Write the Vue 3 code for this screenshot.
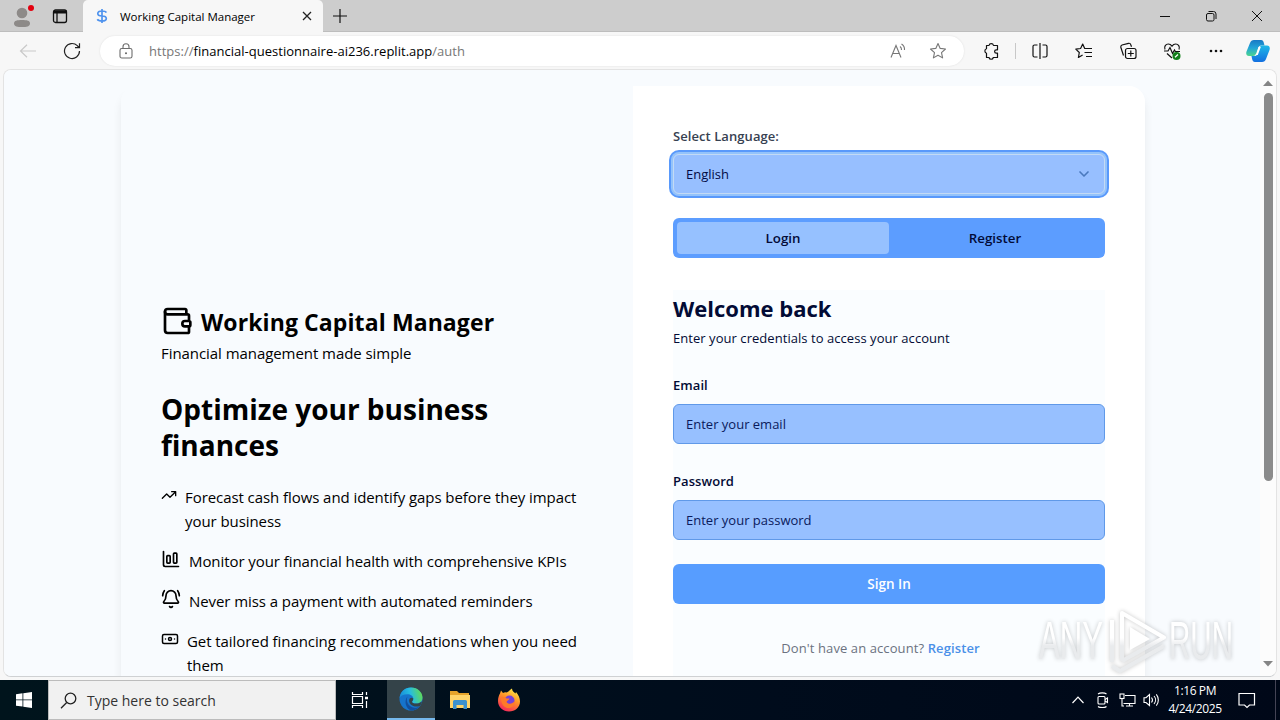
<script setup>
import { ref } from 'vue';

const language = ref('English');
const mode = ref('login');
const email = ref('');
const password = ref('');

const features = [
    { icon: 'trend', width: 16, lines: ['Forecast cash flows and identify gaps before they impact', 'your business'] },
    { icon: 'chart', width: 20, lines: ['Monitor your financial health with comprehensive KPIs'] },
    { icon: 'bell', width: 20, lines: ['Never miss a payment with automated reminders'] },
    { icon: 'banknote', width: 18, lines: ['Get tailored financing recommendations when you need', 'them'] }
];
</script>

<template>
    <div class="desktop">
        <header class="tab-bar">
            <div class="profile">
                <svg width="24" height="26" viewBox="0 0 24 26">
                    <circle cx="11" cy="10" r="5.3" fill="#8d8a88" />
                    <path d="M3 20.500c0-3 3-3.500 8-3.500s8 .5 8 3.500S15.500 24 11 24s-8-.5-8-3.500z" fill="#8d8a88" />
                    <circle cx="20" cy="5" r="3" fill="#e3000f" />
                </svg>
            </div>
            <svg class="workspaces" width="16" height="16" viewBox="0 0 16 16" fill="none" stroke="#111" stroke-width="1.300">
                <rect x="1.500" y="2" width="13" height="12.500" rx="2" />
                <path d="M1.500 4h13" stroke-width="3" />
                <path d="M5 4v10" />
            </svg>
            <div class="tab">
                <svg class="favicon" width="12" height="16" viewBox="0 0 12 16" fill="none" stroke="#4f93ee" stroke-width="1.700">
                    <path d="M6 1v14M10.500 4.500C9.700 3.300 8 3 6 3 3.700 3 1.800 3.800 1.800 5.600S3.500 8 6 8s4.300.7 4.300 2.500S8.500 13 6 13s-4-.5-4.700-1.700" />
                </svg>
                <span class="tab-title">Working Capital Manager</span>
                <svg width="10" height="10" viewBox="0 0 10 10" stroke="#222" stroke-width="1.300">
                    <path d="M1 1l8 8M9 1l-8 8" />
                </svg>
            </div>
            <svg class="new-tab" width="14" height="14" viewBox="0 0 14 14" stroke="#111" stroke-width="1.200">
                <path d="M7 0v14M0 7h14" />
            </svg>
            <div class="window-buttons">
                <svg width="12" height="12" viewBox="0 0 12 12" stroke="#111"><path d="M1 6.500h10" /></svg>
                <svg width="12" height="12" viewBox="0 0 12 12" fill="none" stroke="#111">
                    <rect x="1.500" y="3.500" width="7.500" height="7.500" rx="1.500" />
                    <path d="M3.500 1.500H8.500a2.500 2.500 0 0 1 2.500 2.500v5" />
                </svg>
                <svg width="12" height="12" viewBox="0 0 12 12" stroke="#111"><path d="M1 1l10 10M11 1L1 11" /></svg>
            </div>
        </header>

        <nav class="toolbar">
            <svg class="back" width="18" height="14" viewBox="0 0 18 14" fill="none" stroke="#c9c9c9" stroke-width="1.200">
                <path d="M17 7H1.500M8 .7L1.500 7 8 13.300" />
            </svg>
            <svg class="reload" width="18" height="18" viewBox="0 0 18 18" fill="none" stroke="#222" stroke-width="1.200">
                <path d="M16.500 9A7.500 7.500 0 1 1 14.300 3.700L16 5.500M16.500 1.200v4.500H12" />
            </svg>
            <div class="address">
                <svg class="lock" width="14" height="16" viewBox="0 0 14 16" fill="none" stroke="#6d6d6d" stroke-width="1.100">
                    <rect x="1" y="5.500" width="12" height="9.500" rx="1.800" />
                    <path d="M4 5.500V3.700a3 3 0 0 1 6 0v1.800" />
                    <circle cx="7" cy="10.300" r=".5" fill="#6d6d6d" />
                </svg>
                <p class="url"><span>https://</span>financial-questionnaire-ai236.replit.app<span>/auth</span></p>
                <svg class="read" width="17" height="16" viewBox="0 0 17 16" fill="none" stroke="#777" stroke-width="1.100">
                    <path d="M1 14.500L6 2.500l5 12M2.800 10.500h6.500" />
                    <path d="M10 3.500a4 4 0 0 1 1.500 3.500M11.500 1a6.500 6.500 0 0 1 3 6" />
                </svg>
                <svg width="18" height="18" viewBox="0 0 18 18" fill="none" stroke="#777" stroke-width="1.100" stroke-linejoin="round">
                    <path d="M9 1.500l2.200 4.900 5.300.6-4 3.600 1.100 5.300L9 13.200l-4.600 2.700 1.100-5.300-4-3.600 5.300-.6z" />
                </svg>
            </div>
            <div class="tools">
                <svg width="18" height="18" viewBox="0 0 18 18" fill="none" stroke="#111" stroke-width="1.200" stroke-linejoin="round">
                    <path d="M3.500 3.500H6a2.300 2.300 0 0 1 4.500 0h4v4.300h-1.200a1.600 1.600 0 0 0 0 3.400h1.200v4.300h-4.200a2.200 2.200 0 0 1-4.300 0H3.500v-4.300a2.300 2.300 0 0 1 0-4.400z" />
                </svg>
                <i class="divider"></i>
                <svg width="18" height="18" viewBox="0 0 18 18" fill="none" stroke="#111" stroke-width="1.200">
                    <path d="M6.500 3H3.500A1.500 1.500 0 0 0 2 4.500v9A1.500 1.500 0 0 0 3.500 15h3M11.500 3h3A1.500 1.500 0 0 1 16 4.500v9a1.500 1.500 0 0 1-1.500 1.500h-3M9 1v16" />
                </svg>
                <svg width="18" height="18" viewBox="0 0 18 18" fill="none" stroke="#111" stroke-width="1.200" stroke-linejoin="round">
                    <path d="M13.500 6.500h-3.800L7.700 2 5.600 6.500l-4.800.6 3.500 3.400-.9 5 4.200-2.500M11.500 6.500H17M9.500 10.500H17M11 14.500h6" />
                </svg>
                <svg width="18" height="18" viewBox="0 0 18 18" fill="none" stroke="#111" stroke-width="1.200">
                    <rect x="6.500" y="6.500" width="10.500" height="10" rx="2" />
                    <path d="M11.800 8.500v6M8.800 11.500h6M4.500 13.500L1.800 5.300A2 2 0 0 1 3 3L9.500 1.300a2 2 0 0 1 2.300 1.400l.7 2" />
                </svg>
                <svg width="18" height="18" viewBox="0 0 18 18" fill="none" stroke="#111" stroke-width="1.200">
                    <path d="M2 7.500C.8 4.500 2.800 2 5.300 2 7 2 8.300 3.200 9 4.200 9.700 3.200 11 2 12.700 2c2.500 0 4.500 2.500 3.300 5.500M1 9h4l2-3.500 2.500 6L11.500 8l.8 1.500H17M4 11.500l5 4.500" />
                    <circle cx="13.500" cy="14" r="4" fill="#12801b" stroke="none" />
                    <path d="M12 15.300l3-2.800" stroke="#fff" />
                </svg>
                <svg width="18" height="18" viewBox="0 0 18 18" fill="#111">
                    <circle cx="4" cy="9" r="1.300" /><circle cx="9" cy="9" r="1.300" /><circle cx="14" cy="9" r="1.300" />
                </svg>
            </div>
            <svg class="copilot" width="24" height="24" viewBox="0 0 24 24">
                <defs>
                    <linearGradient id="cp-left" x1="0" y1="0" x2="0" y2="1">
                        <stop offset="0" stop-color="#1879c5" />
                        <stop offset=".5" stop-color="#22a5d8" />
                        <stop offset="1" stop-color="#4bd58e" />
                    </linearGradient>
                    <linearGradient id="cp-right" x1="0" y1="0" x2="0" y2="1">
                        <stop offset="0" stop-color="#1fb9e8" />
                        <stop offset="1" stop-color="#126fe0" />
                    </linearGradient>
                </defs>
                <path d="M8 1h7c2 0 2.500 1.500 3 3.500l.5 2h-3c-2 0-3 1-3.500 3L10 15c-.5 1.300-1.500 2-3 2H3c-2.500 0-3.300-2-2.500-4.500L4 4c.7-2 2-3 4-3z" fill="url(#cp-left)" />
                <path d="M16 23H9c-2 0-2.500-1.500-3-3.500L5.500 17H8c2 0 3-.5 3.500-2.500L14 8c.5-1.300 1.500-1.500 3-1.500h4c2.500 0 3.300 2 2.500 4.500L20 20c-.7 2-2 3-4 3z" fill="url(#cp-right)" />
                <path d="M12.500 8h2.300l-3 8H8.500c1.500 0 2-.7 2.400-2z" fill="#fff" />
            </svg>
        </nav>

        <div class="frame">
            <main class="page">
                <div class="card">
                    <section class="intro">
                        <div class="brand">
                            <svg class="stroke-icon" width="32" height="32" viewBox="0 0 24 24">
                                <path d="M19 7V4a1 1 0 0 0-1-1H5a2 2 0 0 0 0 4h15a1 1 0 0 1 1 1v4h-3a2 2 0 0 0 0 4h3a1 1 0 0 0 1-1v-2a1 1 0 0 0-1-1" />
                                <path d="M3 5v14a2 2 0 0 0 2 2h15a1 1 0 0 0 1-1v-4" />
                            </svg>
                            <h1>Working Capital Manager</h1>
                        </div>
                        <p class="tagline">Financial management made simple</p>
                        <h2>Optimize your business<br>finances</h2>
                        <ul>
                            <li v-for="item in features" :key="item.icon">
                                <svg class="stroke-icon" :width="item.width" height="20" viewBox="0 0 24 24">
                                    <path v-if="item.icon === 'trend'" d="M22 7l-8.500 8.500-5-5L2 17M16 7h6v6" />
                                    <g v-else-if="item.icon === 'chart'">
                                        <path d="M3 3v16a2 2 0 0 0 2 2h16" />
                                        <rect x="15" y="5" width="4" height="12" rx="1" />
                                        <rect x="7" y="8" width="4" height="9" rx="1" />
                                    </g>
                                    <path v-else-if="item.icon === 'bell'" d="M10.268 21a2 2 0 0 0 3.464 0M22 8c0-2.300-.8-4.300-2-6M3.262 15.326A1 1 0 0 0 4 17h16a1 1 0 0 0 .74-1.673C19.410 13.956 18 12.499 18 8A6 6 0 0 0 6 8c0 4.499-1.411 5.956-2.738 7.326M4 2C2.800 3.700 2 5.700 2 8" />
                                    <g v-else>
                                        <rect x="2" y="6" width="20" height="12" rx="2" />
                                        <circle cx="12" cy="12" r="2" />
                                        <path d="M6 12h.01M18 12h.01" />
                                    </g>
                                </svg>
                                <div>
                                    <p v-for="line in item.lines" :key="line">{{ line }}</p>
                                </div>
                            </li>
                        </ul>
                    </section>

                    <section class="auth">
                        <label class="language-label">Select Language:</label>
                        <button class="select">
                            <span>{{ language }}</span>
                            <svg width="16" height="16" viewBox="0 0 24 24" fill="none" stroke="#4a79bd" stroke-width="2.500" stroke-linecap="round" stroke-linejoin="round">
                                <path d="M6 9l6 6 6-6" />
                            </svg>
                        </button>
                        <div class="tabs">
                            <button :class="{ active: mode === 'login' }" @click="mode = 'login'">Login</button>
                            <button :class="{ active: mode === 'register' }" @click="mode = 'register'">Register</button>
                        </div>
                        <form @submit.prevent>
                            <h3>Welcome back</h3>
                            <p class="hint">Enter your credentials to access your account</p>
                            <label for="email" class="email-label">Email</label>
                            <input id="email" v-model="email" type="email" placeholder="Enter your email">
                            <label for="password" class="password-label">Password</label>
                            <input id="password" v-model="password" type="password" placeholder="Enter your password">
                            <button class="submit">Sign In</button>
                            <p class="switch">Don't have an account? <a @click="mode = 'register'">Register</a></p>
                        </form>
                    </section>
                </div>
            </main>
            <div class="scrollbar">
                <svg width="10" height="6" viewBox="0 0 10 6"><path d="M0 6L5 .5 10 6z" fill="#858585" /></svg>
                <div class="thumb"></div>
                <svg class="down" width="10" height="6" viewBox="0 0 10 6"><path d="M0 0l5 5.500L10 0z" fill="#858585" /></svg>
            </div>
        </div>

        <svg class="watermark" width="210" height="74" viewBox="0 0 210 74">
            <defs>
                <linearGradient id="mark" gradientUnits="userSpaceOnUse" x1="0" y1="34" x2="0" y2="42">
                    <stop offset="0" stop-color="#fff" />
                    <stop offset="1" stop-color="#e9ebed" />
                </linearGradient>
            </defs>
            <g fill="url(#mark)">
                <text x="5" y="55" textLength="64" lengthAdjust="spacingAndGlyphs">ANY</text>
                <text x="135" y="55" textLength="64" lengthAdjust="spacingAndGlyphs">RUN</text>
            </g>
            <g fill="none" stroke="url(#mark)" stroke-width="4" stroke-linejoin="round">
                <path d="M88 57V9l42 24.500L88 57M78 58V16M78 62l8 5 44-25" />
            </g>
            <path d="M96 23v23l20-11z" fill="#fff" />
        </svg>

        <footer class="taskbar">
            <div class="start">
                <svg width="16" height="16" viewBox="0 0 16 16" fill="#fff">
                    <path d="M0 2.200L6.500 1.300v6.200H0zM7.300 1.200L16 0v7.500H7.300zM0 8.300h6.500v6.300L0 13.700zM7.300 8.300H16V16l-8.700-1.200z" />
                </svg>
            </div>
            <div class="search">
                <svg width="17" height="17" viewBox="0 0 17 17" fill="none" stroke="#222" stroke-width="1.300">
                    <circle cx="10.500" cy="6.500" r="5.300" /><path d="M6.700 10.500L1 16.300" />
                </svg>
                <span>Type here to search</span>
            </div>
            <div class="app">
                <svg width="18" height="18" viewBox="0 0 18 18" fill="none" stroke="#fff" stroke-width="1.200">
                    <path d="M1.500 1v2.500h10V1M1.500 17v-2.500h10V17M1.500 5.500h10v7h-10zM15.500 1v3M15.500 10v7" />
                    <path d="M14 7h3" stroke-width="2.500" />
                </svg>
            </div>
            <div class="app current">
                <svg width="24" height="24" viewBox="0 0 24 24">
                    <defs>
                        <linearGradient id="edge-top" x1="0" y1=".6" x2="1" y2=".4">
                            <stop offset="0" stop-color="#1689d8" />
                            <stop offset=".5" stop-color="#27bde0" />
                            <stop offset="1" stop-color="#62dc52" />
                        </linearGradient>
                    </defs>
                    <circle cx="12" cy="12" r="11.500" fill="#1674cc" />
                    <path d="M.6 11C1.400 4.500 6 .5 12 .5c7 0 11.500 5 11.500 10 0 4-3 6-6.500 6-2.500 0-4-.8-4-1.600 0-.7 1.300-1.300 1.300-3.200C14.300 9 11.500 7.300 8.500 7.300 4.500 7.300 1.500 9 .6 11z" fill="url(#edge-top)" />
                    <path d="M8.500 9.500C6.500 14 9 20 15.500 20.800c2 .2 4.200-.5 5.800-2C19 22 15.500 23.500 12.500 23.500 7 22.500 4.500 14 8.500 9.500z" fill="#124f9e" />
                    <path d="M14.300 11.500c0 2-1.300 2.600-1.300 3.400 0 1 2.500 2 5.300 1.500 2-.4 3-.8 4.200-2l.3 1.500-1.800 3c-6 2.500-12-2-10.700-6.400.4-1.500 2-2.500 4-1z" fill="#344349" />
                </svg>
            </div>
            <div class="app">
                <svg width="22" height="20" viewBox="0 0 22 20">
                    <path d="M1 1h7l2 2h10v4H1z" fill="#e6a42b" />
                    <path d="M1 5h20v13H1z" fill="#ffd469" />
                    <path d="M4 19v-7.500Q4 10 5.500 10h11q1.500 0 1.500 1.500V19h-3.500v-4h-7v4z" fill="#3b91cf" />
                </svg>
            </div>
            <div class="app">
                <svg width="24" height="24" viewBox="0 0 24 24">
                    <defs>
                        <linearGradient id="fox" x1=".8" y1="0" x2=".3" y2="1">
                            <stop offset="0" stop-color="#fff04a" />
                            <stop offset=".45" stop-color="#ff9427" />
                            <stop offset="1" stop-color="#f5265c" />
                        </linearGradient>
                    </defs>
                    <path d="M3 5.500l1-3 2 2.500c1-.6 2-.7 3-.6C11 4.500 12.500 2 15 .5c0 2.500 2 3.500 3.500 5L19 4c2.500 3 4 6 4 9.500C23 19.500 18 23.500 12 23.500S1 19 1 13c0-3 .8-5.500 2-7.500z" fill="url(#fox)" />
                    <circle cx="12.500" cy="12.500" r="5" fill="#7542d9" />
                    <path d="M4 9c3-.5 4 .5 5.500 1.500h3c0 1.500-2.500 2-3 3.500 2 3 6 2 8-1 .5 4-2 7-6 7C7 20 3.500 15 4 9z" fill="#ff7a28" />
                </svg>
            </div>
            <div class="tray">
                <svg width="12" height="8" viewBox="0 0 12 8" fill="none" stroke="#fff" stroke-width="1.200"><path d="M.5 7L6 1.200 11.500 7" /></svg>
                <svg class="meet" width="14" height="16" viewBox="0 0 14 16" fill="none" stroke="#fff" stroke-width="1.100">
                    <rect x="2" y="4.500" width="7" height="7.500" rx="1" />
                    <path d="M9 7.500l2.500-1.500v4.500L9 9M2 2c2-1.500 6.500-1.500 8.500 0M2 14.500c2 1.500 6.500 1.500 8.500 0" />
                </svg>
                <svg class="network" width="17" height="14" viewBox="0 0 17 14" fill="none" stroke="#fff" stroke-width="1.100">
                    <path d="M6 2.500h10v8H4.500M10.500 10.500v2.500M7 13h7M3 6v7h2" />
                    <rect x="1" y="1" width="4" height="4.500" />
                </svg>
                <svg class="sound" width="17" height="14" viewBox="0 0 17 14" fill="none" stroke="#fff" stroke-width="1.100">
                    <path d="M1 4.700h2L6.500 1.500v11L3 9.500H1zM8.500 4.500a4 4 0 0 1 0 5M11 3a6 6 0 0 1 0 8M13.300 1.300a9 9 0 0 1 0 11.400" />
                </svg>
                <div class="clock">
                    <p>1:16 PM</p>
                    <p>4/24/2025</p>
                </div>
                <svg class="notice" width="18" height="17" viewBox="0 0 18 17" fill="none" stroke="#fff" stroke-width="1.200">
                    <path d="M1 1.500h15.500v11.500h-5L9 15.500 6.500 13H1z" />
                </svg>
                <i class="peek"></i>
            </div>
        </footer>
    </div>
</template>

<style>
body {
    margin: 0;
    overflow: hidden;
}
</style>

<style scoped>
* {
    box-sizing: border-box;
}

.desktop {
    position: relative;
    width: 1280px;
    height: 720px;
    overflow: hidden;
    display: flex;
    flex-direction: column;
    background: #f7f7f7;
    color: #000;
    font-family: "Open Sans", "Noto Sans", sans-serif;
}

h1, h2, h3, p, ul {
    margin: 0;
    padding: 0;
}

svg {
    display: block;
    flex-shrink: 0;
}

button, input {
    font-family: inherit;
    border: 0;
    padding: 0;
}

/* browser */
.tab-bar {
    height: 32px;
    display: flex;
    align-items: center;
    background: #cdcdcd;
    border-bottom: 1px solid #bdbdbd;
}

.profile {
    margin-left: 11px;
    width: 24px;
}

.workspaces {
    margin-left: 17px;
}

.tab {
    width: 240px;
    height: 32px;
    margin-left: 15px;
    margin-bottom: -1px;
    padding: 0 11px 0 13px;
    display: flex;
    align-items: center;
    background: #f7f7f7;
    border-radius: 5px 5px 0 0;
}

.tab-title {
    flex: 1;
    margin-left: 12px;
    font-size: 11.5px;
    white-space: nowrap;
}

.new-tab {
    margin-left: 10px;
}

.window-buttons {
    margin-left: auto;
    margin-right: 17px;
    display: flex;
    gap: 34px;
}

.toolbar {
    height: 37px;
    display: flex;
    align-items: center;
    background: #f7f7f7;
}

.back {
    margin-left: 19px;
}

.reload {
    margin-left: 26px;
}

.address {
    width: 864px;
    height: 30px;
    margin-left: 19px;
    padding: 0 17px 0 19px;
    display: flex;
    align-items: center;
    border-radius: 15px;
    background: #fff;
    box-shadow: 0 0 2px #ddd;
}

.url {
    flex: 1;
    margin-left: 16px;
    font-size: 13px;
    letter-spacing: 0.02px;
}

.url span {
    color: #777;
}

.read {
    margin-right: 22px;
}

.tools {
    margin-left: 19px;
    display: flex;
    align-items: center;
    gap: 26px;
}

.divider {
    width: 1px;
    height: 16px;
    margin: 0 -11px 0 -12px;
    background: #c8c8c8;
}

.copilot {
    margin-left: 21px;
}

.frame {
    height: 608px;
    margin: 0 3px 3px;
    display: flex;
    overflow: hidden;
    background: #fafafa;
    border: 1px solid #e3e3e3;
    border-bottom-color: #cfd1d3;
    border-radius: 8px;
}

/* page */
.page {
    flex: 1;
    padding: 16px 0 0 117px;
    overflow: hidden;
    background: #f8fbfe;
}

.card {
    width: 1024px;
    height: 700px;
    display: flex;
    border-radius: 16px;
    box-shadow: 0 8px 10px rgba(0, 0, 0, 0.07);
}

.intro {
    width: 512px;
    padding: 219px 40px 0;
    background: #f8fbfe;
    border-radius: 16px 0 0 16px;
}

.stroke-icon {
    fill: none;
    stroke: #000;
    stroke-width: 2;
    stroke-linecap: round;
    stroke-linejoin: round;
}

.brand {
    display: flex;
    align-items: center;
    gap: 8px;
}

h1 {
    padding-top: 2px;
    font-size: 23px;
    line-height: 32px;
    letter-spacing: 0.1px;
    white-space: nowrap;
}

.brand {
    height: 32px;
}

.tagline {
    margin-top: 4px;
    font-size: 15px;
    line-height: 25px;
    letter-spacing: -0.06px;
}

h2 {
    margin-top: 25px;
    font-size: 28px;
    line-height: 36px;
    white-space: nowrap;
}

ul {
    margin-top: 22px;
    display: flex;
    flex-direction: column;
    gap: 16px;
    list-style: none;
}

li {
    display: flex;
    gap: 8px;
    font-size: 15px;
    line-height: 24px;
    letter-spacing: -0.07px;
    white-space: nowrap;
}

.auth {
    width: 512px;
    padding: 40px;
    display: flex;
    flex-direction: column;
    background: #fff;
    border-radius: 0 16px 16px 0;
    font-size: 13px;
}

label {
    font-size: 13px;
    font-weight: 600;
    line-height: 20px;
    letter-spacing: 0.07px;
}

.language-label {
    color: #374151;
}

.select {
    height: 40px;
    margin-top: 8px;
    padding: 0 12px;
    display: flex;
    align-items: center;
    justify-content: space-between;
    flex-shrink: 0;
    color: #020b45;
    font-size: 13px;
    background: #97bfff;
    border: 1px solid #c3daf5;
    border-radius: 6px;
    box-shadow: 0 0 0 2px #94c3fb, 0 0 0 4px #5999fb;
}

.tabs {
    height: 40px;
    margin-top: 24px;
    padding: 4px;
    display: grid;
    grid-template-columns: 1fr 1fr;
    flex-shrink: 0;
    background: #5c9dff;
    border-radius: 6px;
}

.tabs button {
    color: #020b38;
    font-size: 13.3px;
    font-weight: 600;
    background: transparent;
    border-radius: 4px;
}

.tabs .active {
    background: #96c1ff;
}

form {
    height: 430px;
    margin-top: 32px;
    display: flex;
    flex-direction: column;
    flex-shrink: 0;
    color: #020b35;
    background: #fafdff;
}

h3 {
    padding-top: 2px;
    font-size: 22px;
    line-height: 32px;
}

.hint {
    margin-top: 4px;
    line-height: 20px;
    letter-spacing: 0.05px;
}

.email-label {
    margin-top: 27px;
}

.password-label {
    margin-top: 27px;
}

input {
    height: 40px;
    margin-top: 9px;
    padding: 0 12px;
    font-size: 13px;
    background: #97c0ff;
    border: 1px solid #6099e8;
    border-radius: 6px;
}

input::placeholder {
    color: #0a1a5c;
}

.submit {
    height: 40px;
    margin-top: 24px;
    color: #fff;
    font-size: 13.5px;
    font-weight: 600;
    background: #579dff;
    border-radius: 6px;
}

.switch {
    margin-top: 34px;
    padding-right: 17px;
    color: #6b7280;
    line-height: 20px;
    letter-spacing: 0.1px;
    text-align: center;
}

.switch a {
    color: #4a90e8;
    font-weight: 600;
}

.scrollbar {
    width: 16px;
    padding: 10px 0 9px;
    display: flex;
    flex-direction: column;
    align-items: center;
    background: #fcfcfc;
}

.thumb {
    width: 9px;
    height: 388px;
    margin-top: 7px;
    background: #8b8b8b;
    border-radius: 5px;
}

.down {
    margin-top: auto;
}

.watermark {
    position: absolute;
    left: 1034px;
    top: 604px;
    overflow: visible;
    font-family: "Liberation Sans", sans-serif;
    font-size: 53px;
    filter: drop-shadow(0 0 2px rgba(0, 0, 0, 0.22));
}

/* taskbar */
.taskbar {
    height: 40px;
    display: flex;
    background: linear-gradient(90deg, #00141c, #000c1c 60%, #000818);
}

.start {
    width: 48px;
    display: flex;
    align-items: center;
    justify-content: center;
}

.search {
    width: 288px;
    padding-left: 11px;
    display: flex;
    align-items: center;
    gap: 10px;
    color: #333;
    font-size: 14px;
    background: #f1f1f1;
    border: 1px solid #bcbcbc;
}

.app {
    width: 49px;
    display: flex;
    align-items: center;
    justify-content: center;
}

.app:nth-child(3) {
    width: 51px;
    padding-right: 3px;
}

.app.current {
    width: 48px;
    background: #344349;
    border-bottom: 2px solid #76b9ed;
}

.tray {
    margin-left: auto;
    display: flex;
    align-items: center;
    color: #fff;
}

.meet {
    margin-left: 12px;
}

.network {
    margin-left: 9px;
}

.sound {
    margin-left: 7px;
}

.clock {
    width: 56px;
    margin: 0 15px 0 7px;
    font-size: 12px;
    line-height: 18px;
    letter-spacing: -0.4px;
    text-align: center;
    white-space: nowrap;
}

.notice {
    margin-right: 19px;
}

.peek {
    width: 1px;
    height: 40px;
    margin-right: 4px;
    background: #445;
}
</style>
